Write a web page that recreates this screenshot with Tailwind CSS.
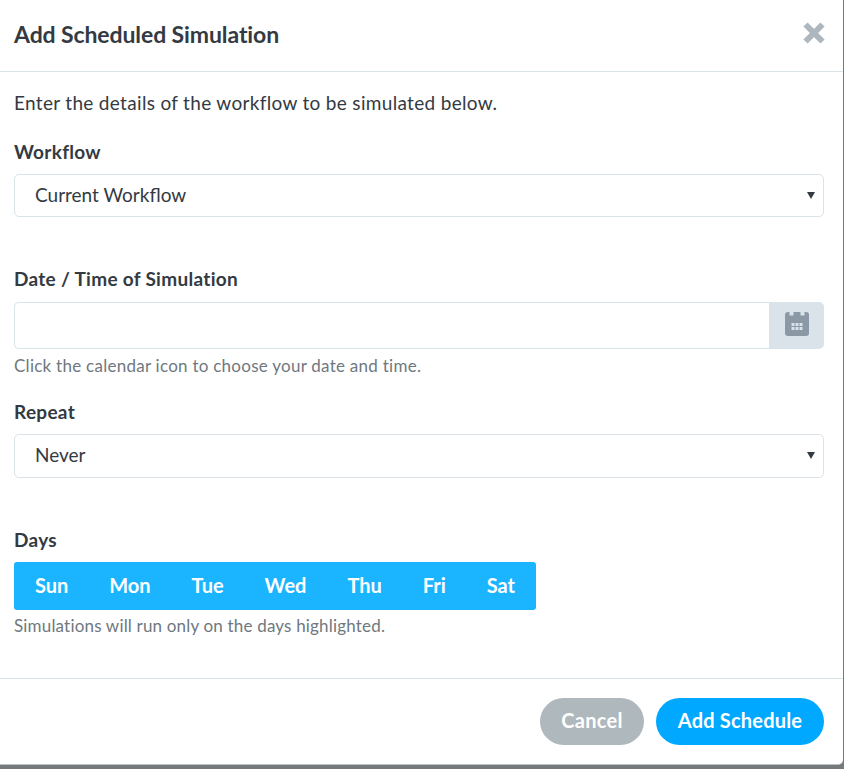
<!DOCTYPE html>
<html lang="en">
<head>
  <meta charset="UTF-8" />
  <title>Add Scheduled Simulation</title>
  <script src="https://cdn.jsdelivr.net/npm/@tailwindcss/browser@4"></script>
</head>
<body class="bg-[#777a7a] h-[769px] overflow-hidden font-['Lato','Open_Sans',sans-serif] text-[#333a42]">
  <div class="w-[843px] h-[765px] bg-white rounded-br-[5px] border-b border-[#b9c4c6]">

    <!-- Header -->
    <header class="h-[72px] pl-[14px] pb-[2px] flex items-center justify-between border-b border-[#d9e3e8]">
      <h1 class="text-[23px] tracking-[-0.1px] font-bold">Add Scheduled Simulation</h1>
      <svg class="mr-[18px] mt-[-4px]" width="22" height="22" viewBox="0 0 22 22" fill="none" stroke="#adb7bd" stroke-width="6">
        <path d="M2.5 2.5l17 17M19.5 2.5l-17 17" />
      </svg>
    </header>

    <!-- Body -->
    <main class="pl-[14px] pr-[19px] pt-[19px] h-[607px] border-b border-[#d9e3e8]">
      <p class="text-[19px] leading-[24px] tracking-[0.32px]">Enter the details of the workflow to be simulated below.</p>

      <label class="block mt-[25px] text-[19px] leading-[24px] tracking-[0.3px] font-bold">Workflow</label>
      <div class="mt-[10px] h-[43px] pl-[20px] pr-[8px] flex items-center justify-between border border-[#d9e3e8] rounded-[5px] text-[19px]">
        <span>Current Workflow</span>
        <span class="w-0 h-0 border-x-4 border-x-transparent border-t-[7px] border-t-[#333a42]"></span>
      </div>

      <label class="block mt-[50px] text-[19px] leading-[24px] tracking-[0.3px] font-bold">Date / Time of Simulation</label>
      <div class="mt-[11px] h-[47px] flex">
        <div class="flex-1 border border-[#d9e3e8] border-r-0 rounded-l-[5px]"></div>
        <div class="w-[55px] bg-[#dae3ea] rounded-r-[5px] flex items-center justify-center">
          <svg class="mb-[3px]" width="24" height="24" viewBox="0 0 24 24">
            <rect width="24" height="24" rx="3" fill="#8b98a5" />
            <path fill="#dae3ea" d="M4.5 0h4v3.5h-4zM15.5 0h4v3.5h-4z" />
            <path fill="#dae3ea" d="M6.5 11h3v3h-3zM10.5 11h3v3h-3zM14.5 11h3v3h-3zM6.5 15h3v3h-3zM10.5 15h3v3h-3zM14.5 15h3v3h-3z" />
          </svg>
        </div>
      </div>
      <p class="mt-[6px] text-[17px] leading-[22px] tracking-[0.26px] text-[#6f7880]">Click the calendar icon to choose your date and time.</p>

      <label class="block mt-[23px] text-[19px] leading-[24px] tracking-[0.3px] font-bold">Repeat</label>
      <div class="mt-[10px] h-[44px] pl-[20px] pr-[8px] pb-[2px] flex items-center justify-between border border-[#d9e3e8] rounded-[5px] text-[19px]">
        <span>Never</span>
        <span class="w-0 h-0 mt-[1px] border-x-4 border-x-transparent border-t-[7px] border-t-[#333a42]"></span>
      </div>

      <label class="block mt-[50px] text-[19px] leading-[24px] tracking-[0.3px] font-bold">Days</label>
      <div class="mt-[10px] w-[522px] h-[48px] pb-[2px] bg-[#1ab4ff] rounded-[3px] flex items-center justify-between px-[21px] text-white text-[20px] font-bold">
        <span>Sun</span><span>Mon</span><span>Tue</span><span>Wed</span><span>Thu</span><span>Fri</span><span>Sat</span>
      </div>
      <p class="mt-[5px] text-[17px] leading-[22px] tracking-[0.18px] text-[#6f7880]">Simulations will run only on the days highlighted.</p>
    </main>

    <!-- Footer -->
    <footer class="flex justify-end gap-[12px] pt-[19px] pr-[19px]">
      <button class="w-[104px] h-[47px] pb-[3px] rounded-full bg-[#aeb8bd] text-white text-[20px] tracking-[0.3px] font-bold">Cancel</button>
      <button class="w-[168px] h-[47px] pb-[3px] rounded-full bg-[#00a8ff] text-white text-[20px] tracking-[0.2px] font-bold">Add Schedule</button>
    </footer>
  </div>
</body>
</html>
